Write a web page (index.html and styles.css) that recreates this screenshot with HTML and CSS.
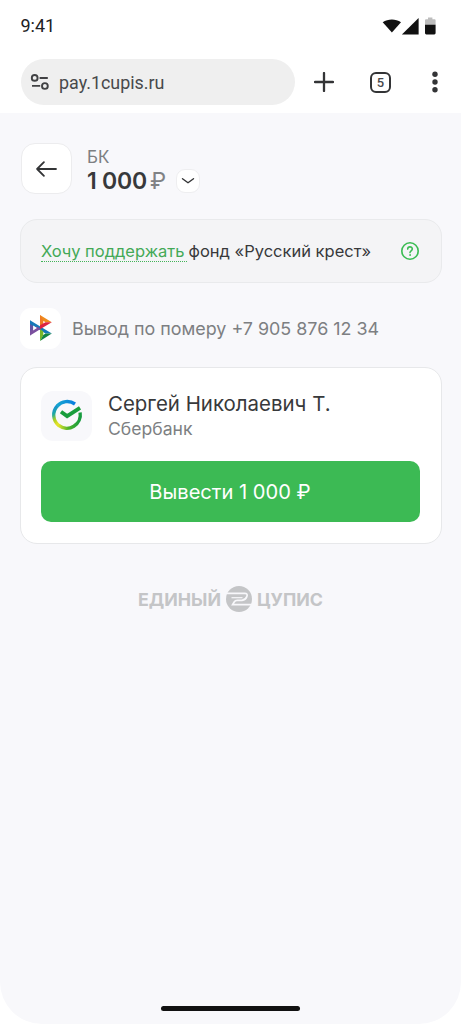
FILE: index.html
```html
<!DOCTYPE html>
<html lang="ru">
<head>
<meta charset="utf-8">
<meta name="viewport" content="width=device-width, initial-scale=1">
<title>pay.1cupis.ru</title>
<link rel="stylesheet" href="styles.css">
</head>
<body>
<div class="screen">
  <header class="status">
    <span class="time">9:41</span>
    <svg class="status-icons" width="56" height="20" viewBox="0 0 56 20">
      <path d="M1.7 6.2C7 2.6 14.7 2.6 20 6.2L10.9 16.6Z" fill="#111"/>
      <path d="M37.6 2V18.4H20.9Z" fill="#111"/>
      <path d="M47 3.2V1.6h4.4v1.6h2.2q1 0 1 1V9H44V4.2q0-1 1-1Z" fill="#bdbdbd"/>
      <path d="M44 8.8h10.6v8.3q0 1.3-1.3 1.3h-8q-1.3 0-1.3-1.3Z" fill="#111"/>
    </svg>
  </header>
  <nav class="browser">
    <div class="address">
      <svg width="20" height="18" viewBox="0 0 20 18" fill="none" stroke="#414244" stroke-width="1.9">
        <circle cx="4.7" cy="4.9" r="2.9"/><path d="M9.6 5h8.2M2 12.9h8.2"/><circle cx="14.9" cy="13" r="2.9"/>
      </svg>
      <span>pay.1cupis.ru</span>
    </div>
    <svg class="plus" width="20" height="20" viewBox="0 0 20 20" stroke="#333436" stroke-width="2.3" stroke-linecap="round"><path d="M10 1v18M1 10h18"/></svg>
    <span class="tabs">5</span>
    <svg class="dots" width="6" height="22" viewBox="0 0 6 22" fill="#333436"><circle cx="3" cy="3.3" r="2.7"/><circle cx="3" cy="11" r="2.7"/><circle cx="3" cy="18.7" r="2.7"/></svg>
  </nav>
  <main class="page">
    <section class="summary">
      <button class="back" aria-label="Назад">
        <svg width="22" height="16" viewBox="0 0 22 16" fill="none" stroke="#333436" stroke-width="1.8" stroke-linecap="round" stroke-linejoin="round"><path d="M20 8H1.1M7.9 1.2L1.1 8l6.8 6.8"/></svg>
      </button>
      <div class="total">
        <div class="merchant">БК</div>
        <div class="sum"><b>1 000</b><span class="currency">₽</span>
          <button class="expand" aria-label="Подробнее"><svg width="14" height="8" viewBox="0 0 14 8" fill="none" stroke="#333436" stroke-width="1.4" stroke-linecap="round" stroke-linejoin="round"><path d="M1.5 1.7L7 5.7l5.5-4"/></svg></button>
        </div>
      </div>
    </section>
    <section class="charity">
      <p><a class="support">Хочу поддержать</a><span class="fund">фонд «Русский крест»</span></p>
      <svg width="20" height="20" viewBox="0 0 20 20" fill="none" stroke="#3bbc53" stroke-width="1.6" stroke-linecap="round">
        <circle cx="10" cy="10" r="8.2"/><path d="M7.7 8.1C7.7 5.2 12.3 5.2 12.3 8c0 1.8-2.3 1.8-2.3 3.6"/><circle cx="10" cy="14" r=".5" fill="#3bbc53" stroke-width=".8"/>
      </svg>
    </section>
    <section class="method">
      <span class="sbp">
        <svg width="24" height="28" viewBox="0 0 24 28">
          <path d="M1 6.2L5.4 13.6V17L1 21.5Z" fill="#6157a4"/>
          <path d="M1 6.2L22.8 19.5l-6.3.1L1 10Z" fill="#1679b9"/>
          <path d="M1 21.5L12 14.7l-4-2.1-7 4.5Z" fill="#7a4f9e"/>
          <path d="M11 1L22.8 8.2l-6.2.1L11 5Z" fill="#ee8b1c"/>
          <path d="M11 1l3.3 5.7v4.1L11 13Z" fill="#ef7925"/>
          <path d="M22.8 8.2L11 15.2v-3.9l5.4-3.1Z" fill="#dc2342"/>
          <path d="M11 15.2l3.3 2.1v3.9L11 27Z" fill="#78b72a"/>
          <path d="M22.8 19.5L11 27l3.3-6.1 2.2-1.4Z" fill="#128442"/>
          <path d="M4.1 11.5v5L8 14Z" fill="#fff"/>
        </svg>
      </span>
      <span class="phone">Вывод по померу +7 905 876 12 34</span>
    </section>
    <section class="card">
      <div class="recipient">
        <span class="bank-icon">
          <svg width="32" height="32" viewBox="0 0 32 32" fill="none" stroke-width="3.4">
            <defs>
              <linearGradient id="left" x1="0" y1="0" x2=".2" y2="1"><stop stop-color="#118be0"/><stop offset=".4" stop-color="#20a9a0"/><stop offset=".7" stop-color="#a8cf25"/><stop offset="1" stop-color="#e4e229"/></linearGradient>
              <linearGradient id="top" x1="0" x2="1"><stop stop-color="#16a6cf"/><stop offset="1" stop-color="#087de0"/></linearGradient>
              <linearGradient id="right" x1="0" x2="1"><stop stop-color="#dce22c"/><stop offset=".45" stop-color="#4eb32c"/><stop offset="1" stop-color="#169b3e"/></linearGradient>
            </defs>
            <path d="M8.2 26.8A13.4 13.4 0 0 1 6.5 6.7" stroke="url(#left)"/>
            <path d="M6.2 7A13.4 13.4 0 0 1 24 5" stroke="url(#top)"/>
            <path d="M29.1 13.5A13.4 13.4 0 0 1 7.7 26.4" stroke="url(#right)"/>
            <path d="M10 12.7l6.1 4.4L29 8.8" stroke="#199d3c" stroke-width="3.8"/>
          </svg>
        </span>
        <div><div class="name">Сергей Николаевич Т.</div><div class="bank">Сбербанк</div></div>
      </div>
      <button class="withdraw"><span>Вывести 1 000 ₽</span></button>
    </section>
    <footer class="brand">
      <span class="brand-left">ЕДИНЫЙ</span>
      <svg width="26" height="26" viewBox="0 0 26 26"><circle cx="13" cy="13" r="13" fill="#c4c5c7"/><path d="M1 7.3H18.5Q22.2 7.3 20.8 10.6Q19.6 13.9 16 14.3H11.2Q9.2 14.3 8.2 16L6.6 18.6H25" fill="none" stroke="#f8f8fb" stroke-width="1.7"/><path d="M5.5 11.7H16.5" fill="none" stroke="#f8f8fb" stroke-width="1.2"/></svg>
      <span class="brand-right">ЦУПИС</span>
    </footer>
    <div class="home-bar"></div>
  </main>
</div>
</body>
</html>
```
FILE: styles.css
```css
* { box-sizing: border-box; }
body { margin: 0; background: #fff; font-family: Inter, sans-serif; color: #38393b; }
button { font: inherit; color: inherit; padding: 0; }
svg { display: block; flex: none; }
p { margin: 0; }
span, a, b { white-space: pre; }
.screen { width: 461px; height: 1024px; display: flex; flex-direction: column; overflow: hidden; }
.status { height: 51px; padding: 0 24px 0 20.5px; display: flex; align-items: center; justify-content: space-between; font: 18px/22px Roboto, sans-serif; color: #202124; }
.browser { height: 62px; padding: 8px 0 8px 21px; display: flex; align-items: center; font-family: Roboto, sans-serif; }
.address { width: 274px; height: 46px; border-radius: 23px; background: #efefef; display: flex; align-items: center; gap: 9px; padding-left: 9px; font-size: 17.9px; color: #48494b; }
.plus { margin-left: 19px; }
.tabs { width: 21px; height: 21px; margin-left: 36px; border: 2.2px solid #333436; border-radius: 6px; font-size: 13px; font-weight: 500; line-height: 17px; text-align: center; color: #48494b; }
.dots { margin-left: 41px; }
.page { flex: 1; padding: 30px 19px 13px 20px; background: #f8f8fb; border-radius: 0 0 42px 42px; display: flex; flex-direction: column; }
.summary { height: 52px; display: flex; gap: 15px; }
.back { width: 51px; height: 51px; margin-left: 1px; border: 1px solid #ececee; border-radius: 14px; background: #fff; display: grid; place-items: center; }
.total { padding-top: 4px; }
.merchant { height: 20px; font-size: 17px; line-height: 20px; color: #7d7f82; }
.sum { height: 28px; display: flex; align-items: center; font-size: 23px; line-height: 28px; }
.sum b { font-weight: 600; letter-spacing: -.2px; }
.currency { margin-left: 3px; color: #808285; }
.expand { width: 24px; height: 24px; margin-left: 10px; border: 1px solid #eeeef0; border-radius: 9px; background: #fff; display: grid; place-items: center; }
.charity { height: 64px; margin-top: 24px; padding: 0 21px 0 20px; border: 1px solid #e9eaec; border-radius: 17px; background: #f4f4f6; display: flex; align-items: center; justify-content: space-between; font-size: 16.5px; line-height: 20px; }
.support { color: #43a957; border-bottom: 1px dotted #43b45a; padding-right: 2px; margin-right: 2px; }
.method { height: 40px; margin-top: 25px; display: flex; align-items: center; gap: 11px; font-size: 17.9px; color: #7d7f82; }
.sbp { width: 41px; height: 41px; border-radius: 11px; background: #fff; display: grid; place-items: center; }
.card { height: 177px; margin-top: 19px; padding: 22px 21px 21px 20px; border: 1px solid #e7e8ea; border-radius: 17px; background: #fff; display: flex; flex-direction: column; justify-content: space-between; }
.recipient { display: flex; align-items: center; gap: 16px; }
.bank-icon { width: 51px; height: 50px; border-radius: 12px; background: #f8f8fb; display: grid; place-items: center; }
.recipient svg { margin-top: -2px; }
.name { font-size: 20.45px; line-height: 26px; padding-top: 1px; }
.bank { font-size: 17.6px; line-height: 24px; color: #7d7f82; }
.withdraw { height: 61px; padding-right: 1px; border: 0; border-radius: 10px; background: #3cba54; color: #fff; font-size: 20.1px; line-height: 24px; }
.brand { height: 26px; margin-top: 42px; padding-right: 1px; display: flex; align-items: center; justify-content: center; gap: 5px; font-size: 17.8px; font-weight: 700; color: #c4c5c7; }
.home-bar { width: 139px; height: 5px; margin: auto 0 0 141px; border-radius: 3px; background: #111; }
```
